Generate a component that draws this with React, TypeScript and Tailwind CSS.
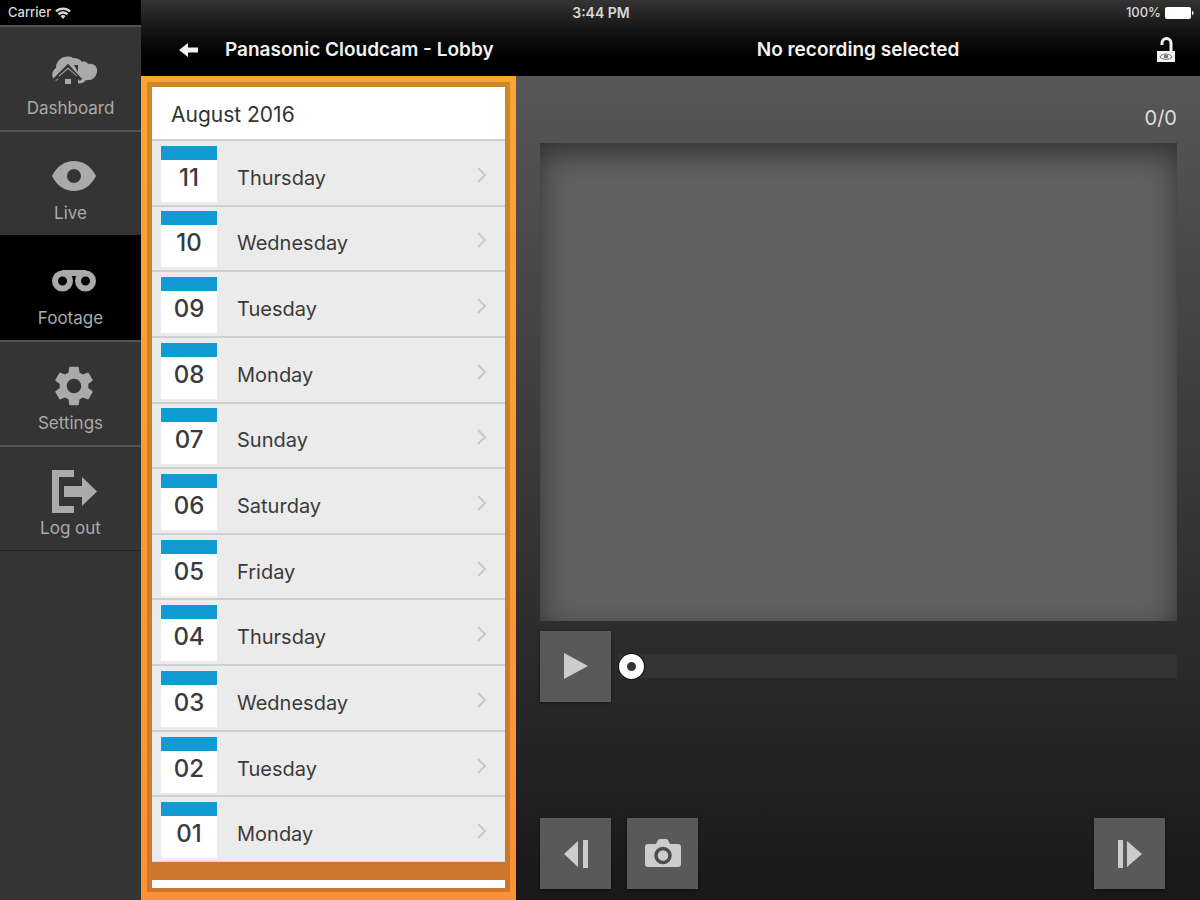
import { useState } from 'react'
import { MdSettings } from 'react-icons/md'

const NAV_ITEMS = [
  { label: 'Dashboard', icon: <CloudHomeIcon /> },
  { label: 'Live', icon: <EyeIcon /> },
  { label: 'Footage', icon: <FootageIcon /> },
  { label: 'Settings', icon: <MdSettings className="size-12" /> },
  { label: 'Log out', icon: <LogOutIcon /> },
]

const DAYS = [
  { date: '11', name: 'Thursday' },
  { date: '10', name: 'Wednesday' },
  { date: '09', name: 'Tuesday' },
  { date: '08', name: 'Monday' },
  { date: '07', name: 'Sunday' },
  { date: '06', name: 'Saturday' },
  { date: '05', name: 'Friday' },
  { date: '04', name: 'Thursday' },
  { date: '03', name: 'Wednesday' },
  { date: '02', name: 'Tuesday' },
  { date: '01', name: 'Monday' },
]

export default function App() {
  const [active, setActive] = useState('Footage')

  return (
    <div className="relative flex min-h-screen w-full bg-[#1a1a1a] font-['Inter',sans-serif]">
      <StatusBar />
      <aside className="w-[141px] shrink-0 bg-[#343434]">
        <div className="h-[25px] bg-black" />
        <nav aria-label="Main" className="border-b border-[#222222]">
          {NAV_ITEMS.map((item) => (
            <button
              key={item.label}
              type="button"
              onClick={() => setActive(item.label)}
              aria-current={item.label === active ? 'page' : undefined}
              className="flex h-[105px] w-full flex-col items-center gap-px border-t-2 border-[#545454] pt-5 text-[#aaaaaa] aria-[current=page]:border-black aria-[current=page]:bg-black"
            >
              <span className="pl-1.5">{item.icon}</span>
              <span className="text-[17px] leading-6">{item.label}</span>
            </button>
          ))}
        </nav>
      </aside>

      <div className="flex min-w-0 flex-1 flex-col">
        <Header />
        <div className="flex flex-1">
          <DayList />
          <Player />
        </div>
      </div>
    </div>
  )
}

function StatusBar() {
  return (
    <div className="absolute inset-x-0 top-0 grid h-[26px] grid-cols-3 items-center pr-1.5 pl-2 text-[13px] font-medium text-[#d8d8d8]">
      <span className="flex items-center gap-1">
        Carrier
        <WifiIcon />
      </span>
      <span className="text-center text-sm font-semibold">3:44 PM</span>
      <span className="flex items-center justify-end gap-1">
        100%
        <BatteryIcon />
      </span>
    </div>
  )
}

function Header() {
  return (
    <header className="flex h-[76px] items-end bg-linear-to-b from-[#343434] to-black pb-2 text-[19px] font-semibold text-[#f2f2f2]">
      <div className="flex h-9 w-[375px] shrink-0 items-center gap-6 pl-9">
        <button type="button" aria-label="Back">
          <BackIcon />
        </button>
        <h1>Panasonic Cloudcam - Lobby</h1>
      </div>
      <div className="flex h-9 flex-1 items-center">
        <span className="flex-1" />
        <h2>No recording selected</h2>
        <span className="flex flex-1 justify-end">
          <button type="button" aria-label="Unlock" className="pr-6">
            <UnlockIcon />
          </button>
        </span>
      </div>
    </header>
  )
}

function DayList() {
  return (
    <section className="flex w-[375px] shrink-0 flex-col bg-linear-to-b from-[#fba632] to-[#fb9136] p-1.5 pb-2">
      <div className="flex flex-1 flex-col bg-black/18 p-[5px] pb-1">
        <h2 className="h-[52px] bg-white pl-[19px] text-[21px] leading-[56px] text-[#333333]">August 2016</h2>
        <ul className="flex flex-1 flex-col border-b border-[#c4dde6]">
          {DAYS.map((day) => (
            <li key={day.date} className="flex flex-1">
              <button
                type="button"
                className="flex w-full items-center border-t-2 border-[#d0d0d0] bg-[#ebebeb] pt-1 pr-3 pb-0.5 pl-[9px] text-[#3a3a3a]"
              >
                <span className="h-14 w-14 border-t-14 border-[#109bd2] bg-white text-2xl leading-9 font-medium">{day.date}</span>
                <span className="flex-1 pt-2 pl-5 text-left text-xl">{day.name}</span>
                <ChevronIcon />
              </button>
            </li>
          ))}
        </ul>
        <div className="mt-[18px] h-2 bg-white" />
      </div>
    </section>
  )
}

function Player() {
  const [position, setPosition] = useState(0)

  return (
    <main className="flex min-w-0 flex-1 flex-col bg-linear-to-b from-[#575757] via-[#383838] to-[#191919] pr-[23px] pb-[11px] pl-6">
      <p className="h-[67px] pt-7 text-right text-xl text-[#dedede]">0/0</p>
      <div className="aspect-[4/3] w-full bg-[#616161] shadow-[inset_0_10px_30px_rgba(0,0,0,0.5)]" />
      <div className="mt-2.5 flex items-center gap-2">
        <ControlButton label="Play">
          <svg viewBox="0 0 24 26" className="h-[26px] w-6" fill="currentColor">
            <path d="M0 0 24 13 0 26z" />
          </svg>
        </ControlButton>
        <input
          type="range"
          aria-label="Playback position"
          min={0}
          max={100}
          value={position}
          onChange={(e) => setPosition(Number(e.target.value))}
          className="h-6 min-w-0 flex-1 appearance-none bg-[#333333] [&::-webkit-slider-thumb]:size-[25px] [&::-webkit-slider-thumb]:appearance-none [&::-webkit-slider-thumb]:rounded-full [&::-webkit-slider-thumb]:border-8 [&::-webkit-slider-thumb]:border-white [&::-webkit-slider-thumb]:bg-[#333333] [&::-webkit-slider-thumb]:shadow-[0_0_0_1px_#111111]"
        />
      </div>
      <div className="mt-auto flex gap-4 pr-3 pt-8">
        <ControlButton label="Previous frame">
          <svg viewBox="0 0 24 28" className="h-7 w-6" fill="currentColor">
            <path d="M0 14 14 1v26zM19 0h5v28h-5z" />
          </svg>
        </ControlButton>
        <ControlButton label="Take snapshot">
          <CameraIcon />
        </ControlButton>
        <span className="flex-1" />
        <ControlButton label="Next frame">
          <svg viewBox="0 0 24 28" className="h-7 w-6" fill="currentColor">
            <path d="M24 14 9 1v26zM0 0h5v28H0z" />
          </svg>
        </ControlButton>
      </div>
    </main>
  )
}

function ControlButton({ label, children }: { label: string; children: React.ReactNode }) {
  return (
    <button
      type="button"
      aria-label={label}
      className="flex size-[71px] shrink-0 items-center justify-center bg-[#595959] text-[#cccccc] shadow-[0_1px_3px_rgba(0,0,0,0.5)]"
    >
      {children}
    </button>
  )
}

function CloudHomeIcon() {
  return (
    <svg viewBox="0 0 48 48" className="size-12" fill="currentColor">
      <path d="M6 34C1 32 1 24 6 21c0-9 10-14 17-10 4 0 7 1 9 4 3-1 5 0 6 2 7-1 10 4 9 8-1 6-6 9-11 8-2 3-6 4-9 3l-9-13z" />
      <path d="M8 31 18 22l10 9v7H8z" fill="#343434" />
      <path d="m4 33 14-14 13 14" fill="none" stroke="#343434" strokeWidth="3" />
      <path d="M24 18h4v7z" fill="#343434" />
      <path d="m9 29 9-8 9 8" fill="none" stroke="currentColor" strokeWidth="1" />
      <path d="M15 32h6v5h-6z" />
    </svg>
  )
}

function EyeIcon() {
  return (
    <svg viewBox="0 0 48 48" className="size-12" fill="currentColor" fillRule="evenodd">
      <path d="M2 24C7 14 15 9 24 9s17 5 22 15c-5 10-13 15-22 15S7 34 2 24zm22-7a7 7 0 1 0 0 14 7 7 0 0 0 0-14z" />
    </svg>
  )
}

function FootageIcon() {
  return (
    <svg viewBox="0 0 48 48" className="size-12" fill="none" stroke="currentColor">
      <circle cx="12.5" cy="24" r="7.5" strokeWidth="6" />
      <circle cx="35.5" cy="24" r="7.5" strokeWidth="6" />
      <path d="M12 16h24" strokeWidth="6" />
    </svg>
  )
}

function LogOutIcon() {
  return (
    <svg viewBox="0 0 48 48" className="size-12" fill="currentColor">
      <path d="M2 3h22v7H9v29h15v7H2z" />
      <path d="M14 19h18v-9l15 14.500L32 39v-9H14z" />
    </svg>
  )
}

function CameraIcon() {
  return (
    <svg viewBox="0 0 36 30" className="h-[30px] w-9" fill="currentColor">
      <path d="M3 5h8l2-4q1-1 2-1h6q1 0 2 1l2 4h8q3 0 3 3v17q0 3-3 3H3q-3 0-3-3V8q0-3 3-3z" />
      <circle cx="18" cy="16.500" r="7" fill="none" stroke="#4c4c4c" strokeWidth="3.500" />
    </svg>
  )
}

function WifiIcon() {
  return (
    <svg viewBox="0 0 16 12" className="h-3 w-4" fill="none" stroke="currentColor" strokeWidth="2.400">
      <path d="M1 4.500a10 10 0 0 1 14 0M3.500 7.300a6.500 6.500 0 0 1 9 0" />
      <path d="m8 12 2.500-3a4 4 0 0 0-5 0z" fill="currentColor" stroke="none" />
    </svg>
  )
}

function BatteryIcon() {
  return (
    <svg viewBox="0 0 29 12" className="h-3 w-[29px]" fill="#ffffff">
      <rect x="0" y="0" width="26" height="12" rx="2" />
      <path d="M27 4c2 0 2 4 0 4z" />
    </svg>
  )
}

function BackIcon() {
  return (
    <svg viewBox="0 0 24 20" className="h-5 w-6" fill="currentColor">
      <path d="m2 10 9-7v4.500h10v5H11V17z" />
    </svg>
  )
}

function UnlockIcon() {
  return (
    <svg viewBox="0 0 20 26" className="h-[26px] w-5" fill="currentColor">
      <path d="M6 8V6a4.500 4.500 0 0 1 9 0v9" fill="none" stroke="currentColor" strokeWidth="3" />
      <path d="M1 14h18v11H1z" />
      <path d="M4 20c2-4 10-4 12 0-2 3-10 3-12 0z" fill="none" stroke="#777777" />
      <path d="M8 18h4v3H8z" fill="#777777" />
    </svg>
  )
}

function ChevronIcon() {
  return (
    <svg viewBox="0 0 20 20" className="size-5" fill="none" stroke="#c8c8c8" strokeWidth="2">
      <path d="m5 4 7 7-7 7" />
    </svg>
  )
}
